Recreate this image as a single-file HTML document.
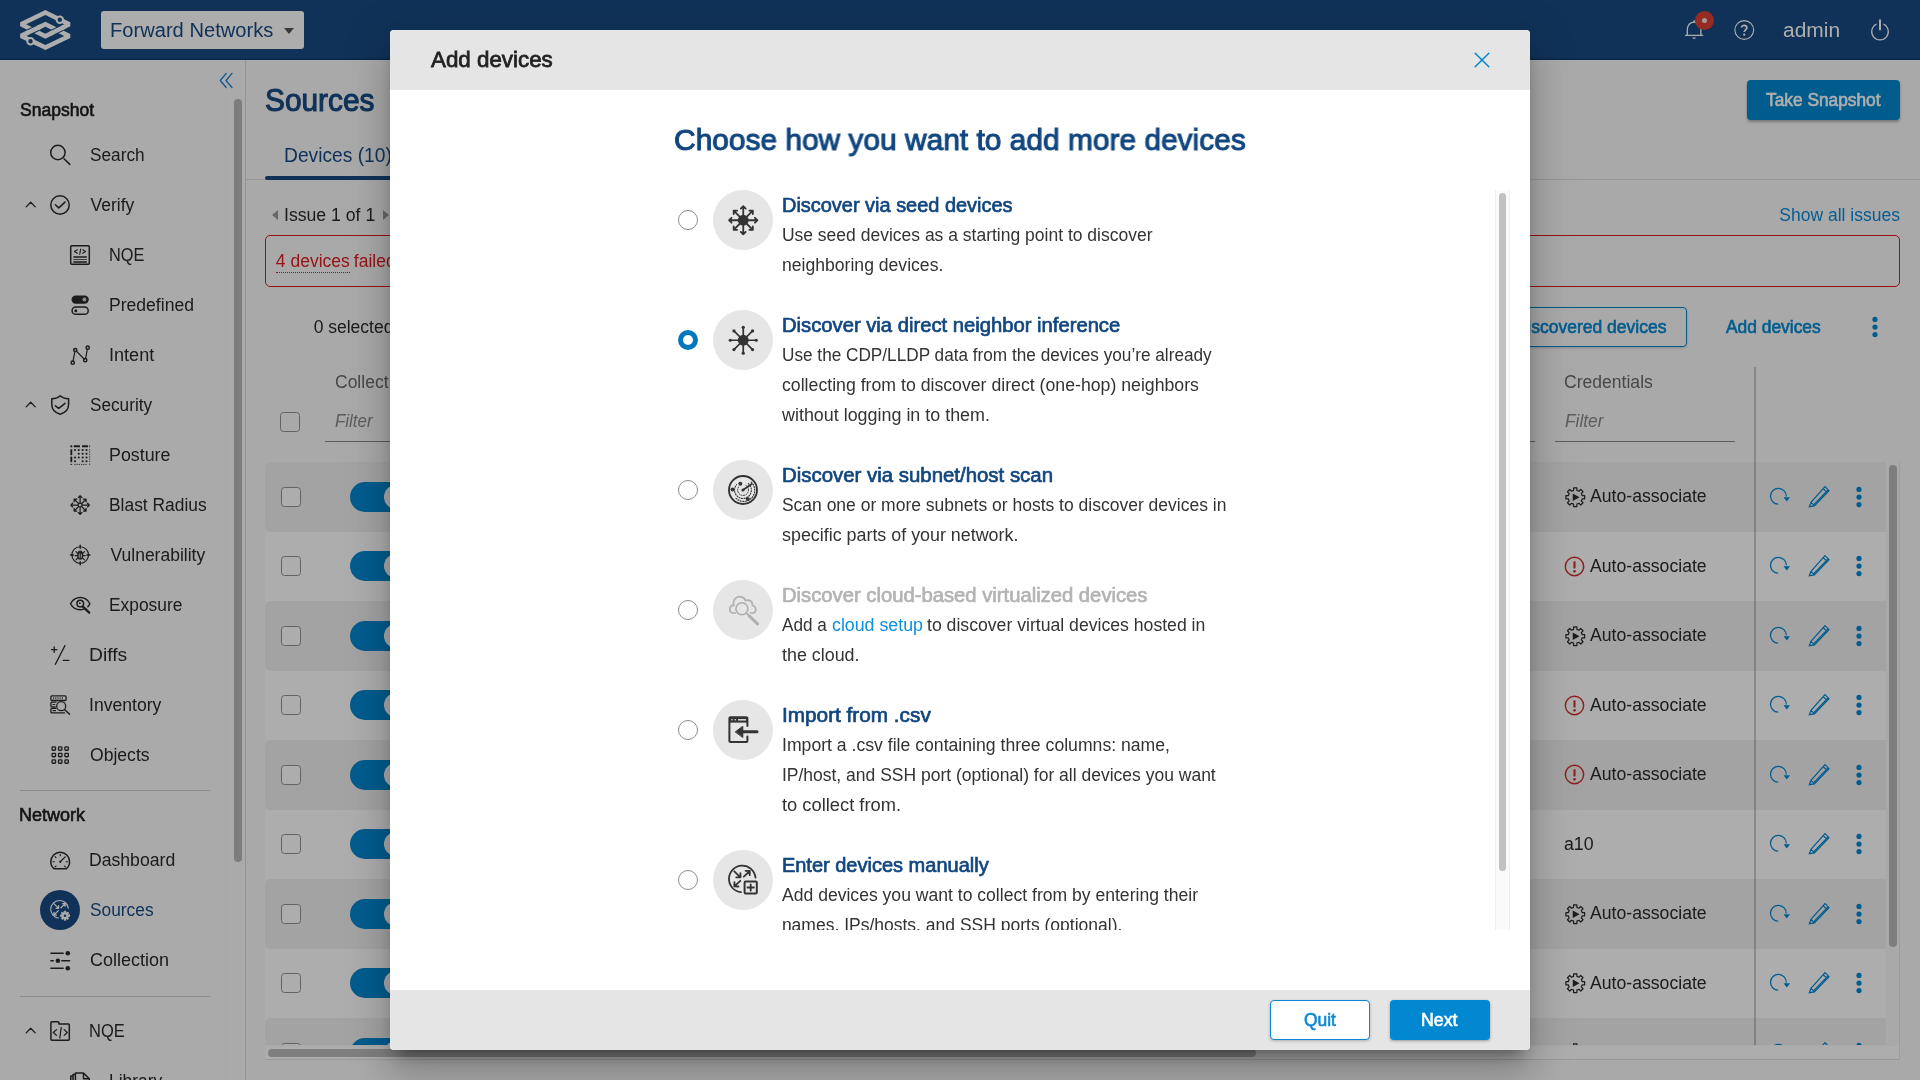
<!DOCTYPE html>
<html lang="en"><head><meta charset="utf-8"><title>Sources - Add devices</title>
<style>
*{margin:0;padding:0}
html,body{width:1920px;height:1080px;overflow:hidden;background:#fafafa}
body{font-family:"Liberation Sans",Arial,sans-serif;font-size:17.5px;color:#212121;position:relative}
header,nav,main,section,div,span,h1,h2,h3,h4,p,a,svg.ic{position:absolute;display:block}
header,nav,main,section{will-change:transform}
h1,h2,h3,h4{font-weight:normal}
.t{white-space:nowrap;line-height:30px;transform-origin:0 50%;font-size:17.5px}
.m{-webkit-text-stroke:.034em currentColor}
.b{font-weight:bold}
.i{font-style:italic}
a{text-decoration:none}
svg.ic{fill:none;stroke:currentColor;stroke-width:1.5;stroke-linecap:round;stroke-linejoin:round;overflow:visible}
.topbar{background:#184b82;box-shadow:inset 0 -1.5px 0 #0f3b6c;z-index:3}
.sidebar{background:#fbfbfb;overflow:hidden;z-index:1}
.main{background:#fafafa;overflow:hidden;z-index:1}
.rows{overflow:hidden;background:#fff}
.overlay{left:0;top:0;width:1920px;height:1080px;background:rgba(0,0,0,.32);z-index:5}
.modal{background:#fff;border-radius:4px;z-index:6;box-shadow:0 11px 15px -7px rgba(0,0,0,.4),0 24px 38px 3px rgba(0,0,0,.14),0 9px 46px 8px rgba(0,0,0,.1)}
.scroll{overflow:hidden}
</style></head>
<body>
<header class="topbar" style="left:0px;top:0px;width:1920px;height:60px;">
<svg class="ic" viewBox="0 0 52 52" width="52" height="52" style="left:19px;top:4px;color:#fff;"><path d="M26.40 8.40 L50.30 20.30 L26.40 32.20 L2.10 20.30 Z" stroke-width="4.5" stroke-linejoin="miter" stroke-miterlimit="1.5" stroke-linecap="butt"/><path d="M26.40 20.30 L50.30 31.90 L26.40 43.50 L2.10 31.90 Z" stroke-width="4.5" stroke-linejoin="miter" stroke-miterlimit="1.5" stroke-linecap="butt"/><path d="M9.39 28.42 L19.11 23.78" stroke="#184b82" stroke-width="6.6" stroke-linecap="butt"/><path d="M6.96 29.58 L21.54 22.62" stroke-width="4.5" stroke-linecap="butt"/><path d="M43.13 23.87 L33.57 28.63" stroke="#184b82" stroke-width="6.6" stroke-linecap="butt"/><path d="M45.52 22.68 L31.18 29.82" stroke-width="4.5" stroke-linecap="butt"/><circle cx="40.80" cy="15.75" r="3.2" fill="#184b82" stroke-width="2"/><circle cx="11.50" cy="37.20" r="3.2" fill="#184b82" stroke-width="2"/></svg>
<div class="org" style="left:101px;top:11px;width:203px;height:38px;background:#fff;border-radius:3px;"></div>
<span class="t" style="left:110.39px;top:15px;font-size:20px;color:#184b82;transform:scaleX(1.0063);">Forward Networks</span>
<svg class="ic" viewBox="0 0 10 6" width="10" height="6" style="left:284px;top:27.5px;color:#555"><path d="M0 0h10L5 6z" fill="currentColor" stroke="none"/></svg>
<svg class="ic" viewBox="0 0 24 24" width="24" height="24" style="left:1681.5px;top:18px;color:#fff;"><path d="M3.5 17.3 H20.7 M5.3 17 V11.6 C5.3 7.3 8.3 4.2 12.1 4.2 C15.9 4.2 18.9 7.3 18.9 11.6 V17" stroke-width="1.3"/><path d="M10.2 19.6 A2 2 0 0 0 14 19.6 Z" fill="currentColor" stroke="none"/><circle cx="12.1" cy="3.3" r="1" fill="currentColor" stroke="none"/></svg>
<div style="left:1694.6px;top:10.5px;width:19.6px;height:19.6px;background:#dc4033;border-radius:50%;"></div>
<div style="left:1701.9px;top:17.8px;width:5px;height:5px;background:#fff;border-radius:50%;opacity:.85"></div>
<svg class="ic" viewBox="0 0 24 24" width="24" height="24" style="left:1731.5px;top:18px;color:#fff;"><circle cx="12.25" cy="12" r="9.4" stroke-width="1.1"/><path d="M9.6 9.6 C9.6 6.6 14.8 6.6 14.8 9.7 C14.8 11.8 12.2 11.8 12.2 14.1" stroke-width="1.7" stroke-linecap="butt"/><circle cx="12.2" cy="16.7" r="1.1" fill="currentColor" stroke="none"/></svg>
<span class="t" style="left:1783.16px;top:15px;font-size:20px;color:#fff;transform:scaleX(1.0476);">admin</span>
<svg class="ic" viewBox="0 0 24 24" width="24" height="24" style="left:1868px;top:18px;color:#fff;"><path d="M8.2 6.2 A8.3 8.3 0 1 0 15.8 6.2" stroke-width="1.2"/><path d="M12 2.2 V11.6" stroke-width="2"/></svg>
</header>
<nav class="sidebar" style="left:0px;top:60px;width:245px;height:1020px;">
<div style="left:230px;top:35px;width:1px;height:985px;background:#fff"></div>
<div style="left:234px;top:39px;width:8px;height:763px;background:#b9b9b9;border-radius:4px;"></div>
<svg class="ic" viewBox="0 0 20 20" width="20" height="20" style="left:215.5px;top:10px;color:#1583d3;"><path d="M10.2 3.4 L4.3 10.5 L10.2 17.5 M16 3.4 L10 10.5 L16 17.5" stroke-width="1.3"/></svg>
<span class="t m" style="left:20.1px;top:35px;color:#1c1c1c;">Snapshot</span>
<svg class="ic" viewBox="0 0 20 20" width="20" height="20" style="left:50px;top:85px;color:#2a2a2a;"><circle cx="7.9" cy="7.5" r="7.2"/><path d="M14 13.8 L19.8 19.4" stroke-width="1.5"/></svg>
<span class="t" style="left:89.81px;top:80px;color:#2a2a2a;transform:scaleX(0.9841);">Search</span>
<svg class="ic" viewBox="0 0 20 20" width="20" height="20" style="left:50px;top:135px;color:#2a2a2a;"><circle cx="10" cy="10" r="9.2"/><path d="M5.4 9.8 L8.75 12.9 L15 7.1"/></svg>
<span class="t" style="left:90.5px;top:130px;color:#2a2a2a;">Verify</span>
<svg class="ic" viewBox="0 0 14 14" width="14" height="14" style="left:23.5px;top:138px;color:#2a2a2a;"><path d="M2.2 8.9 L6.7 4.2 L11.2 8.9" stroke-width="1.3"/></svg>
<svg class="ic" viewBox="0 0 20 20" width="20" height="20" style="left:70px;top:185px;color:#2a2a2a;"><rect x="0.7" y="0.7" width="18.6" height="18.6" rx="1"/><path d="M7.3 4.8 L4.4 6.5 L7.3 8.2 M10.7 4 L9.7 9.3 M12.75 4.8 L15.5 6.5 L12.75 8.2" stroke-width="1.1"/><path d="M3.3 12.1 H16.9 M3.3 16.9 H16.9" stroke-width="1.5" stroke-linecap="butt"/><path d="M3.3 14.5 H16.9" stroke-width="0.8" stroke-linecap="butt"/></svg>
<span class="t" style="left:109.19px;top:180px;color:#2a2a2a;transform:scaleX(0.9331);">NQE</span>
<svg class="ic" viewBox="0 0 20 20" width="20" height="20" style="left:70px;top:235px;color:#2a2a2a;"><rect x="1.5" y="0.4" width="17.3" height="8.4" rx="4.2" fill="currentColor" stroke="none"/><circle cx="14.4" cy="4.5" r="1.9" fill="#cfcfcf" stroke="none"/><rect x="2.1" y="12.1" width="16.1" height="7.2" rx="3.6"/><circle cx="5.8" cy="15.7" r="1.5" fill="currentColor" stroke="none"/></svg>
<span class="t" style="left:109.09px;top:230px;color:#2a2a2a;transform:scaleX(1.0036);">Predefined</span>
<svg class="ic" viewBox="0 0 20 20" width="20" height="20" style="left:70px;top:285px;color:#2a2a2a;"><path d="M3 16.1 L4.9 6.6 M6.4 6.1 L14.1 14 M15.6 13.6 L17.3 4.3" stroke-width="1.2"/><circle cx="2.7" cy="17.7" r="1.6"/><circle cx="5.25" cy="5" r="1.6"/><circle cx="15.25" cy="15.2" r="1.6"/><circle cx="17.7" cy="2.7" r="1.6"/></svg>
<span class="t" style="left:108.85px;top:280px;color:#2a2a2a;transform:scaleX(1.0333);">Intent</span>
<svg class="ic" viewBox="0 0 20 20" width="20" height="20" style="left:50px;top:335px;color:#2a2a2a;"><path d="M10.2 0.8 C8.2 2.8 5 3.6 1.8 3.8 V9.5 C1.8 14.5 5.5 17.8 10.2 19.3 C14.9 17.8 18.6 14.5 18.6 9.5 V3.8 C15.4 3.6 12.2 2.8 10.2 0.8 Z"/><path d="M5.4 10.8 L8.75 13.3 L15 8.3"/></svg>
<span class="t" style="left:89.81px;top:330px;color:#2a2a2a;transform:scaleX(0.9824);">Security</span>
<svg class="ic" viewBox="0 0 14 14" width="14" height="14" style="left:23.5px;top:338px;color:#2a2a2a;"><path d="M2.2 8.9 L6.7 4.2 L11.2 8.9" stroke-width="1.3"/></svg>
<svg class="ic" viewBox="0 0 20 20" width="20" height="20" style="left:70px;top:385px;color:#2a2a2a;"><g fill="currentColor" stroke="none"><circle cx="1.3" cy="1.3" r="1.1"/><rect x="3.7" y="0.35" width="6.3" height="1.9" rx=".6"/><rect x="12" y="0.35" width="6" height="1.9" rx=".6"/><rect x="19.3" y="0.4" width=".8" height="1.8"/><rect x="0.35" y="4.2" width="1.9" height="6" rx=".6"/><rect x="0.35" y="11.6" width="1.9" height="5.6" rx=".6"/><rect x="0.4" y="18.9" width="1.7" height=".9"/><circle cx="5" cy="5" r="1.08"/><circle cx="5" cy="12.5" r="1.08"/><circle cx="5" cy="16.25" r="1.08"/><circle cx="8.75" cy="5" r="1.08"/><circle cx="8.75" cy="8.75" r="1.08"/><circle cx="8.75" cy="12.5" r="1.08"/><circle cx="12.7" cy="5" r="1.08"/><circle cx="12.7" cy="8.75" r="1.08"/><circle cx="12.7" cy="12.5" r="1.08"/><circle cx="12.7" cy="16.25" r="1.08"/><circle cx="16.5" cy="5" r="1.08"/><circle cx="16.5" cy="8.75" r="1.08"/><circle cx="16.5" cy="12.5" r="1.08"/><circle cx="16.5" cy="16.25" r="1.08"/><rect x="4.4" y="18.9" width="1.2" height=".9"/><rect x="6.6" y="18.9" width="1.2" height=".9"/><rect x="8.8" y="18.9" width="1.2" height=".9"/><rect x="11" y="18.9" width="1.2" height=".9"/><rect x="13.2" y="18.9" width="1.2" height=".9"/><rect x="15.4" y="18.9" width="1.2" height=".9"/><rect x="19.3" y="4.3" width=".8" height="1.2"/><rect x="19.3" y="6.6" width=".8" height="1.2"/><rect x="19.3" y="8.9" width=".8" height="1.2"/><rect x="19.3" y="11.2" width=".8" height="1.2"/><rect x="19.3" y="13.5" width=".8" height="1.2"/><rect x="19.3" y="15.8" width=".8" height="1.2"/><rect x="19.3" y="18.6" width=".8" height="1.2"/></g></svg>
<span class="t" style="left:109.07px;top:380px;color:#2a2a2a;transform:scaleX(1.0180);">Posture</span>
<svg class="ic" viewBox="0 0 20 20" width="20" height="20" style="left:70px;top:435px;color:#2a2a2a;"><path d="M12.30 10.10 L19.40 10.10 M19.40 10.10 L17.56 11.94 M19.40 10.10 L17.56 8.26" stroke-width="1.25"/><path d="M11.66 11.66 L16.04 16.04 M16.04 16.04 L13.44 16.04 M16.04 16.04 L16.04 13.44" stroke-width="1.25"/><path d="M10.10 12.30 L10.10 19.40 M10.10 19.40 L8.26 17.56 M10.10 19.40 L11.94 17.56" stroke-width="1.25"/><path d="M8.54 11.66 L4.16 16.04 M4.16 16.04 L4.16 13.44 M4.16 16.04 L6.76 16.04" stroke-width="1.25"/><path d="M7.90 10.10 L0.80 10.10 M0.80 10.10 L2.64 8.26 M0.80 10.10 L2.64 11.94" stroke-width="1.25"/><path d="M8.54 8.54 L4.16 4.16 M4.16 4.16 L6.76 4.16 M4.16 4.16 L4.16 6.76" stroke-width="1.25"/><path d="M10.10 7.90 L10.10 0.80 M10.10 0.80 L11.94 2.64 M10.10 0.80 L8.26 2.64" stroke-width="1.25"/><path d="M11.66 8.54 L16.04 4.16 M16.04 4.16 L16.04 6.76 M16.04 4.16 L13.44 4.16" stroke-width="1.25"/><circle cx="10.1" cy="10.1" r="1.9" stroke-width="1.2"/></svg>
<span class="t" style="left:109.11px;top:430px;color:#2a2a2a;transform:scaleX(0.9943);">Blast Radius</span>
<svg class="ic" viewBox="0 0 20 20" width="20" height="20" style="left:70px;top:485px;color:#2a2a2a;"><circle cx="10.2" cy="10" r="8.3" stroke-width="1.15"/><path d="M10.2 0.3 V3.3 M10.2 16.7 V19.7 M0.5 10 H3.5 M16.9 10 H19.9" stroke-width="1.4"/><ellipse cx="10.2" cy="10.7" rx="2.4" ry="3.3" stroke-width="1.2"/><path d="M8.4 7.3 C8.8 5.6 11.6 5.6 12 7.3 M7.8 10.7 H5.2 M12.6 10.7 H15.2 M8.1 8.8 L6 6.6 M12.3 8.8 L14.4 6.6 M8.1 12.7 L6 14.8 M12.3 12.7 L14.4 14.8 M10.2 7.6 V13.8" stroke-width="1.2"/></svg>
<span class="t" style="left:110.5px;top:480px;color:#2a2a2a;">Vulnerability</span>
<svg class="ic" viewBox="0 0 20 20" width="20" height="20" style="left:70px;top:535px;color:#2a2a2a;"><path d="M13.8 14.1 C12.7 14.5 11.5 14.7 10.25 14.7 C6 14.7 2.4 12.4 0.5 8.75 C2.4 5.1 6 2.6 10.25 2.6 C14.5 2.6 18.1 5.1 19.9 8.75 C19.4 9.8 18.7 10.8 17.9 11.6"/><circle cx="10.25" cy="8.6" r="3.3"/><circle cx="9.8" cy="8.2" r=".9" fill="currentColor" stroke="none"/><path d="M12.9 11.6 L19.2 17.6" stroke-width="2.3"/></svg>
<span class="t" style="left:109.11px;top:530px;color:#2a2a2a;transform:scaleX(0.9923);">Exposure</span>
<svg class="ic" viewBox="0 0 20 20" width="20" height="20" style="left:50px;top:585px;color:#2a2a2a;"><path d="M4.2 1.9 V7.3 M1.5 4.6 H6.9 M15 0.5 L5.4 19.3 M13.3 15.4 H18.8" stroke-width="1.35"/></svg>
<span class="t" style="left:88.96px;top:580px;color:#2a2a2a;transform:scaleX(1.1009);">Diffs</span>
<svg class="ic" viewBox="0 0 20 20" width="20" height="20" style="left:50px;top:635px;color:#2a2a2a;"><rect x="0.9" y="0.9" width="15.2" height="4.6" rx="1" stroke-width="1.3"/><path d="M3.6 2.6 V3.8 M5.8 2.6 V3.8 M8 2.6 V3.8 M10.2 2.6 V3.8 M12.4 2.6 V3.8" stroke-width=".8"/><path d="M6 7.1 H1.9 A1 1 0 0 0 0.9 8.1 V10.9 A1 1 0 0 0 1.9 11.9 H5.2 M5.8 13.3 H1.9 A1 1 0 0 0 0.9 14.3 V16.9 A1 1 0 0 0 1.9 17.9 H14.5" stroke-width="1.3"/><path d="M3 9.5 H4.8 M3 15.6 H5.6" stroke-width="1.1"/><circle cx="11.2" cy="11.2" r="4.5" stroke-width="1.3"/><path d="M14.7 14.7 L19.6 19.2" stroke-width="1.5"/></svg>
<span class="t" style="left:88.89px;top:630px;color:#2a2a2a;transform:scaleX(1.0050);">Inventory</span>
<svg class="ic" viewBox="0 0 20 20" width="20" height="20" style="left:50px;top:685px;color:#2a2a2a;"><g stroke-width="1.35"><rect x="2.10" y="1.80" width="3.4" height="3.4" rx=".8"/><rect x="2.10" y="8.30" width="3.4" height="3.4" rx=".8"/><rect x="2.10" y="14.80" width="3.4" height="3.4" rx=".8"/><rect x="8.50" y="1.80" width="3.4" height="3.4" rx=".8"/><rect x="8.50" y="8.30" width="3.4" height="3.4" rx=".8"/><rect x="8.50" y="14.80" width="3.4" height="3.4" rx=".8"/><rect x="14.90" y="1.80" width="3.4" height="3.4" rx=".8"/><rect x="14.90" y="8.30" width="3.4" height="3.4" rx=".8"/><rect x="14.90" y="14.80" width="3.4" height="3.4" rx=".8"/></g></svg>
<span class="t" style="left:89.7px;top:680px;color:#2a2a2a;transform:scaleX(1.0043);">Objects</span>
<div style="left:20px;top:730px;width:190px;height:1px;background:#d0d0d0"></div>
<span class="t m" style="left:19.36px;top:740px;color:#1c1c1c;transform:scaleX(1.0295);">Network</span>
<svg class="ic" viewBox="0 0 20 20" width="20" height="20" style="left:50px;top:790px;color:#2a2a2a;"><path d="M4.2 18.8 H16.2 C18.6 16.9 19.6 14.5 19.6 11.7 A9.4 9.4 0 0 0 0.8 11.7 C0.8 14.5 1.8 16.9 4.2 18.8 Z"/><path d="M10.25 11.8 L15.2 6.9" stroke-width="1.3"/><circle cx="10.25" cy="11.8" r="1.1" fill="currentColor" stroke="none"/><path d="M16.25 11.80 L17.55 11.80" stroke-width="1.1"/><path d="M14.49 16.04 L15.41 16.96" stroke-width="1.1"/><path d="M6.01 16.04 L5.09 16.96" stroke-width="1.1"/><path d="M4.25 11.80 L2.95 11.80" stroke-width="1.1"/><path d="M6.01 7.56 L5.09 6.64" stroke-width="1.1"/><path d="M10.25 5.80 L10.25 4.50" stroke-width="1.1"/></svg>
<span class="t" style="left:89.09px;top:785px;color:#2a2a2a;transform:scaleX(1.0066);">Dashboard</span>
<div style="left:40px;top:830px;width:40px;height:40px;background:#184b82;border-radius:50%;"></div>
<svg class="ic" viewBox="0 0 20 20" width="20" height="20" style="left:50px;top:840px;color:#fff;"><path d="M18.3 8.2 A8.8 8.8 0 1 0 8.6 18" stroke-width="1.1"/><path d="M3.90 3.60 L8.60 8.30 M8.60 8.30 L6.00 8.30 M8.60 8.30 L8.60 5.70" stroke-width="1.2"/><path d="M10.90 7.80 L15.20 3.60 M15.20 3.60 L15.17 6.20 M15.20 3.60 L12.60 3.57" stroke-width="1.2"/><path d="M8.40 10.60 L3.90 15.00 M3.90 15.00 L3.93 12.40 M3.90 15.00 L6.50 15.03" stroke-width="1.2"/><path d="M19.53 14.91 L19.53 16.49 L18.21 16.47 L17.81 17.42 L18.76 18.35 L17.65 19.46 L16.72 18.51 L15.77 18.91 L15.79 20.23 L14.21 20.23 L14.23 18.91 L13.28 18.51 L12.35 19.46 L11.24 18.35 L12.19 17.42 L11.79 16.47 L10.47 16.49 L10.47 14.91 L11.79 14.93 L12.19 13.98 L11.24 13.05 L12.35 11.94 L13.28 12.89 L14.23 12.49 L14.21 11.17 L15.79 11.17 L15.77 12.49 L16.72 12.89 L17.65 11.94 L18.76 13.05 L17.81 13.98 L18.21 14.93 Z" fill="currentColor" stroke="currentColor" stroke-width=".9" stroke-linejoin="round"/><circle cx="15" cy="15.7" r="1.3" fill="#184b82" stroke="none"/></svg>
<span class="t" style="left:89.81px;top:835px;color:#184b82;transform:scaleX(0.9897);">Sources</span>
<svg class="ic" viewBox="0 0 20 20" width="20" height="20" style="left:50px;top:890px;color:#2a2a2a;"><path d="M0.9 3.2 H13.2 M0.9 10.8 H3.3 M11.8 10.8 H19.6 M0.9 18.3 H13.2" stroke-width="1.4"/><circle cx="17.8" cy="3.3" r="2.3" fill="currentColor" stroke="none"/><circle cx="7.9" cy="10.8" r="2.3" fill="currentColor" stroke="none"/><circle cx="17.8" cy="18.3" r="2.3" fill="currentColor" stroke="none"/></svg>
<span class="t" style="left:89.68px;top:885px;color:#2a2a2a;transform:scaleX(1.0280);">Collection</span>
<div style="left:20px;top:936px;width:190px;height:1px;background:#d0d0d0"></div>
<svg class="ic" viewBox="0 0 20 20" width="20" height="20" style="left:50px;top:961px;color:#2a2a2a;"><path d="M1.9 0.8 H7.9 A1 1 0 0 1 8.9 1.8 V2.9 H18.3 A1 1 0 0 1 19.3 3.9 V18.2 A1 1 0 0 1 18.3 19.2 H1.9 A1 1 0 0 1 0.9 18.2 V1.8 A1 1 0 0 1 1.9 0.8 Z"/><path d="M6.5 8.6 L3.3 11.5 L6.5 14.4 M11.25 6.5 L9.8 16.9 M14.2 8.6 L17.3 11.5 L14.2 14.4" stroke-width="1.25"/></svg>
<span class="t" style="left:89.18px;top:956px;color:#2a2a2a;transform:scaleX(0.9401);">NQE</span>
<svg class="ic" viewBox="0 0 14 14" width="14" height="14" style="left:23.5px;top:964px;color:#2a2a2a;"><path d="M2.2 8.9 L6.7 4.2 L11.2 8.9" stroke-width="1.3"/></svg>
<svg class="ic" viewBox="0 0 20 20" width="20" height="20" style="left:70px;top:1011px;color:#2a2a2a;"><path d="M5.4 2 H13.5 L19.3 7.8 V19 H5.4 Z M13.5 2 V7.8 H19.3 M5.4 3.6 H3 V19 M3 5 H0.8 V19"/></svg>
<span class="t" style="left:109.11px;top:1006px;color:#2a2a2a;transform:scaleX(0.9933);">Library</span>
</nav>
<main class="main" style="left:245px;top:60px;width:1675px;height:1020px;">
<div style="left:0px;top:0px;width:1px;height:1020px;background:#dadada"></div>
<h1 class="t m" style="left:19.74px;top:20px;font-size:32px;line-height:40px;color:#184b82;transform:scaleX(0.9327);">Sources</h1>
<div class="btn" style="left:1502px;top:20px;width:153px;height:40px;background:#0288d1;border-radius:4px;box-shadow:0 2px 3px rgba(0,0,0,.3);"></div>
<span class="t m" style="left:1520.75px;top:25px;color:#fff;transform:scaleX(0.9892);">Take Snapshot</span>
<div style="left:0px;top:119px;width:1675px;height:1px;background:#dcdcdc"></div>
<span class="t" style="left:39.26px;top:80px;font-size:20px;color:#184b82;transform:scaleX(0.9607);">Devices (10)</span>
<div style="left:20px;top:116px;width:300px;height:4px;background:#184b82;border-radius:2px;"></div>
<svg class="ic" viewBox="0 0 6 10" width="6" height="10" style="left:27px;top:150px;color:#9a9a9a"><path d="M6 0v10L0 5z" fill="currentColor" stroke="none"/></svg>
<svg class="ic" viewBox="0 0 6 10" width="6" height="10" style="left:138px;top:150px;color:#9a9a9a"><path d="M0 0v10l6-5z" fill="currentColor" stroke="none"/></svg>
<span class="t" style="left:38.89px;top:140px;color:#2a2a2a;transform:scaleX(1.0085);">Issue 1 of 1</span>
<span class="t" style="left:1534.3px;top:140px;color:#0b8ad8;">Show all issues</span>
<div class="alert" style="left:20px;top:175px;width:1635px;height:52px;border:1.5px solid #de1b20;border-radius:5px;box-sizing:border-box;"></div>
<span class="t" style="left:30.85px;top:186px;color:#de1b20;border-bottom:1px dotted #de1b20;line-height:22px;margin-top:4px;">4 devices</span>
<span class="t" style="left:108.8px;top:186px;color:#de1b20;">failed collection</span>
<span class="t" style="left:68.65px;top:252px;color:#2a2a2a;">0 selected</span>
<div style="left:1155px;top:247px;width:287px;height:40px;border:1px solid #0288d1;border-radius:4px;box-sizing:border-box;box-shadow:0 1px 3px rgba(0,0,0,.2);"></div>
<span class="t m" style="left:1230.15px;top:252px;color:#0288d1;">View discovered devices</span>
<span class="t m" style="left:1481.05px;top:252px;color:#0288d1;transform:scaleX(0.9932);">Add devices</span>
<svg class="ic" viewBox="0 0 24 24" width="24" height="24" style="left:1618px;top:255px;color:#0288d1;"><circle cx="12" cy="4.4" r="2.6" fill="currentColor" stroke="none"/><circle cx="12" cy="12.05" r="2.6" fill="currentColor" stroke="none"/><circle cx="12" cy="19.6" r="2.6" fill="currentColor" stroke="none"/></svg>
<span class="t" style="left:90px;top:306.6px;color:#6a6a6a;">Collect</span>
<div style="left:35px;top:352px;width:20px;height:20px;border:1.3px solid #919191;border-radius:3.5px;box-sizing:border-box;"></div>
<span class="t i" style="left:90.02px;top:346px;color:#8a8a8a;transform:scaleX(0.9655);">Filter</span>
<div style="left:80px;top:380.5px;width:1210px;height:1px;background:#8a8a8a"></div>
<span class="t" style="left:1319.2px;top:306.6px;color:#6a6a6a;transform:scaleX(1.0034);">Credentials</span>
<span class="t i" style="left:1319.5px;top:346px;color:#8a8a8a;transform:scaleX(0.9910);">Filter</span>
<div style="left:1310px;top:380.5px;width:180px;height:1px;background:#8a8a8a"></div>
<div class="rows" style="left:20px;top:402px;width:1621px;height:583px;">
<div style="left:0px;top:0px;width:1621px;height:69.5px;background:#f1f1f1;border-radius:5px 0 0 5px;"></div>
<div style="left:16px;top:24.75px;width:20px;height:20px;border:1.3px solid #919191;border-radius:3.5px;box-sizing:border-box;background:#fff"></div>
<div style="left:85px;top:19.75px;width:60px;height:30px;background:#0288d1;border-radius:15px;"></div>
<div style="left:119px;top:22.75px;width:24px;height:24px;background:#fff;border-radius:50%;"></div>
<svg class="ic" viewBox="0 0 22 22" width="20.5" height="20.5" style="left:1299.55px;top:24.5px;color:#2a2a2a;"><path d="M21.05 9.25 L21.05 12.75 L18.39 12.77 L17.48 14.97 L19.35 16.87 L16.87 19.35 L14.97 17.48 L12.77 18.39 L12.75 21.05 L9.25 21.05 L9.23 18.39 L7.03 17.48 L5.13 19.35 L2.65 16.87 L4.52 14.97 L3.61 12.77 L0.95 12.75 L0.95 9.25 L3.61 9.23 L4.52 7.03 L2.65 5.13 L5.13 2.65 L7.03 4.52 L9.23 3.61 L9.25 0.95 L12.75 0.95 L12.77 3.61 L14.97 4.52 L16.87 2.65 L19.35 5.13 L17.48 7.03 L18.39 9.23 Z" stroke-width="1.3" stroke-linejoin="round"/><path d="M8.3 6.9 V15.1 L15.6 11 Z" fill="currentColor" stroke="none"/></svg>
<span class="t" style="left:1325.3px;top:19.45px;color:#2a2a2a;transform:scaleX(1.0078);">Auto-associate</span>
<svg class="ic" viewBox="0 0 24 24" width="24" height="24" style="left:1502px;top:22.75px;color:#0288d1;"><path d="M11.2 19.2 A7.9 7.9 0 1 1 19.3 11.6" stroke-width="1.25" stroke-linecap="butt"/><path d="M16.6 12.2 H23 L19.75 16.6 Z" fill="currentColor" stroke="none"/></svg>
<svg class="ic" viewBox="0 0 24 24" width="24" height="24" style="left:1542px;top:22.75px;color:#0288d1;"><path d="M2.3 21.7 L4 17.4 L18 1.7 L22 5.7 L7.4 20.9 Z M16.1 3.6 L20.2 7.5 M4 17.4 L7.4 20.9 M6.5 19.9 L21 4.8" stroke-width="1.2" stroke-linejoin="miter"/></svg>
<svg class="ic" viewBox="0 0 24 24" width="24" height="24" style="left:1581.7px;top:22.75px;color:#0288d1;"><circle cx="12" cy="4.4" r="2.6" fill="currentColor" stroke="none"/><circle cx="12" cy="12.05" r="2.6" fill="currentColor" stroke="none"/><circle cx="12" cy="19.6" r="2.6" fill="currentColor" stroke="none"/></svg>
<div style="left:16px;top:94.25px;width:20px;height:20px;border:1.3px solid #919191;border-radius:3.5px;box-sizing:border-box;background:#fff"></div>
<div style="left:85px;top:89.25px;width:60px;height:30px;background:#0288d1;border-radius:15px;"></div>
<div style="left:119px;top:92.25px;width:24px;height:24px;background:#fff;border-radius:50%;"></div>
<svg class="ic" viewBox="0 0 22 22" width="21" height="21" style="left:1299.3px;top:93.75px;color:#d32f2f;"><circle cx="11" cy="11" r="9.6" stroke-width="1.5"/><path d="M11 5.6 V13" stroke-width="2.2" stroke-linecap="butt"/><circle cx="11" cy="16.1" r="1.35" fill="currentColor" stroke="none"/></svg>
<span class="t" style="left:1325.3px;top:88.95px;color:#2a2a2a;transform:scaleX(1.0078);">Auto-associate</span>
<svg class="ic" viewBox="0 0 24 24" width="24" height="24" style="left:1502px;top:92.25px;color:#0288d1;"><path d="M11.2 19.2 A7.9 7.9 0 1 1 19.3 11.6" stroke-width="1.25" stroke-linecap="butt"/><path d="M16.6 12.2 H23 L19.75 16.6 Z" fill="currentColor" stroke="none"/></svg>
<svg class="ic" viewBox="0 0 24 24" width="24" height="24" style="left:1542px;top:92.25px;color:#0288d1;"><path d="M2.3 21.7 L4 17.4 L18 1.7 L22 5.7 L7.4 20.9 Z M16.1 3.6 L20.2 7.5 M4 17.4 L7.4 20.9 M6.5 19.9 L21 4.8" stroke-width="1.2" stroke-linejoin="miter"/></svg>
<svg class="ic" viewBox="0 0 24 24" width="24" height="24" style="left:1581.7px;top:92.25px;color:#0288d1;"><circle cx="12" cy="4.4" r="2.6" fill="currentColor" stroke="none"/><circle cx="12" cy="12.05" r="2.6" fill="currentColor" stroke="none"/><circle cx="12" cy="19.6" r="2.6" fill="currentColor" stroke="none"/></svg>
<div style="left:0px;top:139px;width:1621px;height:69.5px;background:#f1f1f1;border-radius:5px 0 0 5px;"></div>
<div style="left:16px;top:163.75px;width:20px;height:20px;border:1.3px solid #919191;border-radius:3.5px;box-sizing:border-box;background:#fff"></div>
<div style="left:85px;top:158.75px;width:60px;height:30px;background:#0288d1;border-radius:15px;"></div>
<div style="left:119px;top:161.75px;width:24px;height:24px;background:#fff;border-radius:50%;"></div>
<svg class="ic" viewBox="0 0 22 22" width="20.5" height="20.5" style="left:1299.55px;top:163.5px;color:#2a2a2a;"><path d="M21.05 9.25 L21.05 12.75 L18.39 12.77 L17.48 14.97 L19.35 16.87 L16.87 19.35 L14.97 17.48 L12.77 18.39 L12.75 21.05 L9.25 21.05 L9.23 18.39 L7.03 17.48 L5.13 19.35 L2.65 16.87 L4.52 14.97 L3.61 12.77 L0.95 12.75 L0.95 9.25 L3.61 9.23 L4.52 7.03 L2.65 5.13 L5.13 2.65 L7.03 4.52 L9.23 3.61 L9.25 0.95 L12.75 0.95 L12.77 3.61 L14.97 4.52 L16.87 2.65 L19.35 5.13 L17.48 7.03 L18.39 9.23 Z" stroke-width="1.3" stroke-linejoin="round"/><path d="M8.3 6.9 V15.1 L15.6 11 Z" fill="currentColor" stroke="none"/></svg>
<span class="t" style="left:1325.3px;top:158.45px;color:#2a2a2a;transform:scaleX(1.0078);">Auto-associate</span>
<svg class="ic" viewBox="0 0 24 24" width="24" height="24" style="left:1502px;top:161.75px;color:#0288d1;"><path d="M11.2 19.2 A7.9 7.9 0 1 1 19.3 11.6" stroke-width="1.25" stroke-linecap="butt"/><path d="M16.6 12.2 H23 L19.75 16.6 Z" fill="currentColor" stroke="none"/></svg>
<svg class="ic" viewBox="0 0 24 24" width="24" height="24" style="left:1542px;top:161.75px;color:#0288d1;"><path d="M2.3 21.7 L4 17.4 L18 1.7 L22 5.7 L7.4 20.9 Z M16.1 3.6 L20.2 7.5 M4 17.4 L7.4 20.9 M6.5 19.9 L21 4.8" stroke-width="1.2" stroke-linejoin="miter"/></svg>
<svg class="ic" viewBox="0 0 24 24" width="24" height="24" style="left:1581.7px;top:161.75px;color:#0288d1;"><circle cx="12" cy="4.4" r="2.6" fill="currentColor" stroke="none"/><circle cx="12" cy="12.05" r="2.6" fill="currentColor" stroke="none"/><circle cx="12" cy="19.6" r="2.6" fill="currentColor" stroke="none"/></svg>
<div style="left:16px;top:233.25px;width:20px;height:20px;border:1.3px solid #919191;border-radius:3.5px;box-sizing:border-box;background:#fff"></div>
<div style="left:85px;top:228.25px;width:60px;height:30px;background:#0288d1;border-radius:15px;"></div>
<div style="left:119px;top:231.25px;width:24px;height:24px;background:#fff;border-radius:50%;"></div>
<svg class="ic" viewBox="0 0 22 22" width="21" height="21" style="left:1299.3px;top:232.75px;color:#d32f2f;"><circle cx="11" cy="11" r="9.6" stroke-width="1.5"/><path d="M11 5.6 V13" stroke-width="2.2" stroke-linecap="butt"/><circle cx="11" cy="16.1" r="1.35" fill="currentColor" stroke="none"/></svg>
<span class="t" style="left:1325.3px;top:227.95px;color:#2a2a2a;transform:scaleX(1.0078);">Auto-associate</span>
<svg class="ic" viewBox="0 0 24 24" width="24" height="24" style="left:1502px;top:231.25px;color:#0288d1;"><path d="M11.2 19.2 A7.9 7.9 0 1 1 19.3 11.6" stroke-width="1.25" stroke-linecap="butt"/><path d="M16.6 12.2 H23 L19.75 16.6 Z" fill="currentColor" stroke="none"/></svg>
<svg class="ic" viewBox="0 0 24 24" width="24" height="24" style="left:1542px;top:231.25px;color:#0288d1;"><path d="M2.3 21.7 L4 17.4 L18 1.7 L22 5.7 L7.4 20.9 Z M16.1 3.6 L20.2 7.5 M4 17.4 L7.4 20.9 M6.5 19.9 L21 4.8" stroke-width="1.2" stroke-linejoin="miter"/></svg>
<svg class="ic" viewBox="0 0 24 24" width="24" height="24" style="left:1581.7px;top:231.25px;color:#0288d1;"><circle cx="12" cy="4.4" r="2.6" fill="currentColor" stroke="none"/><circle cx="12" cy="12.05" r="2.6" fill="currentColor" stroke="none"/><circle cx="12" cy="19.6" r="2.6" fill="currentColor" stroke="none"/></svg>
<div style="left:0px;top:278px;width:1621px;height:69.5px;background:#f1f1f1;border-radius:5px 0 0 5px;"></div>
<div style="left:16px;top:302.75px;width:20px;height:20px;border:1.3px solid #919191;border-radius:3.5px;box-sizing:border-box;background:#fff"></div>
<div style="left:85px;top:297.75px;width:60px;height:30px;background:#0288d1;border-radius:15px;"></div>
<div style="left:119px;top:300.75px;width:24px;height:24px;background:#fff;border-radius:50%;"></div>
<svg class="ic" viewBox="0 0 22 22" width="21" height="21" style="left:1299.3px;top:302.25px;color:#d32f2f;"><circle cx="11" cy="11" r="9.6" stroke-width="1.5"/><path d="M11 5.6 V13" stroke-width="2.2" stroke-linecap="butt"/><circle cx="11" cy="16.1" r="1.35" fill="currentColor" stroke="none"/></svg>
<span class="t" style="left:1325.3px;top:297.45px;color:#2a2a2a;transform:scaleX(1.0078);">Auto-associate</span>
<svg class="ic" viewBox="0 0 24 24" width="24" height="24" style="left:1502px;top:300.75px;color:#0288d1;"><path d="M11.2 19.2 A7.9 7.9 0 1 1 19.3 11.6" stroke-width="1.25" stroke-linecap="butt"/><path d="M16.6 12.2 H23 L19.75 16.6 Z" fill="currentColor" stroke="none"/></svg>
<svg class="ic" viewBox="0 0 24 24" width="24" height="24" style="left:1542px;top:300.75px;color:#0288d1;"><path d="M2.3 21.7 L4 17.4 L18 1.7 L22 5.7 L7.4 20.9 Z M16.1 3.6 L20.2 7.5 M4 17.4 L7.4 20.9 M6.5 19.9 L21 4.8" stroke-width="1.2" stroke-linejoin="miter"/></svg>
<svg class="ic" viewBox="0 0 24 24" width="24" height="24" style="left:1581.7px;top:300.75px;color:#0288d1;"><circle cx="12" cy="4.4" r="2.6" fill="currentColor" stroke="none"/><circle cx="12" cy="12.05" r="2.6" fill="currentColor" stroke="none"/><circle cx="12" cy="19.6" r="2.6" fill="currentColor" stroke="none"/></svg>
<div style="left:16px;top:372.25px;width:20px;height:20px;border:1.3px solid #919191;border-radius:3.5px;box-sizing:border-box;background:#fff"></div>
<div style="left:85px;top:367.25px;width:60px;height:30px;background:#0288d1;border-radius:15px;"></div>
<div style="left:119px;top:370.25px;width:24px;height:24px;background:#fff;border-radius:50%;"></div>
<span class="t" style="left:1299.29px;top:366.95px;color:#2a2a2a;transform:scaleX(1.0125);">a10</span>
<svg class="ic" viewBox="0 0 24 24" width="24" height="24" style="left:1502px;top:370.25px;color:#0288d1;"><path d="M11.2 19.2 A7.9 7.9 0 1 1 19.3 11.6" stroke-width="1.25" stroke-linecap="butt"/><path d="M16.6 12.2 H23 L19.75 16.6 Z" fill="currentColor" stroke="none"/></svg>
<svg class="ic" viewBox="0 0 24 24" width="24" height="24" style="left:1542px;top:370.25px;color:#0288d1;"><path d="M2.3 21.7 L4 17.4 L18 1.7 L22 5.7 L7.4 20.9 Z M16.1 3.6 L20.2 7.5 M4 17.4 L7.4 20.9 M6.5 19.9 L21 4.8" stroke-width="1.2" stroke-linejoin="miter"/></svg>
<svg class="ic" viewBox="0 0 24 24" width="24" height="24" style="left:1581.7px;top:370.25px;color:#0288d1;"><circle cx="12" cy="4.4" r="2.6" fill="currentColor" stroke="none"/><circle cx="12" cy="12.05" r="2.6" fill="currentColor" stroke="none"/><circle cx="12" cy="19.6" r="2.6" fill="currentColor" stroke="none"/></svg>
<div style="left:0px;top:417px;width:1621px;height:69.5px;background:#f1f1f1;border-radius:5px 0 0 5px;"></div>
<div style="left:16px;top:441.75px;width:20px;height:20px;border:1.3px solid #919191;border-radius:3.5px;box-sizing:border-box;background:#fff"></div>
<div style="left:85px;top:436.75px;width:60px;height:30px;background:#0288d1;border-radius:15px;"></div>
<div style="left:119px;top:439.75px;width:24px;height:24px;background:#fff;border-radius:50%;"></div>
<svg class="ic" viewBox="0 0 22 22" width="20.5" height="20.5" style="left:1299.55px;top:441.5px;color:#2a2a2a;"><path d="M21.05 9.25 L21.05 12.75 L18.39 12.77 L17.48 14.97 L19.35 16.87 L16.87 19.35 L14.97 17.48 L12.77 18.39 L12.75 21.05 L9.25 21.05 L9.23 18.39 L7.03 17.48 L5.13 19.35 L2.65 16.87 L4.52 14.97 L3.61 12.77 L0.95 12.75 L0.95 9.25 L3.61 9.23 L4.52 7.03 L2.65 5.13 L5.13 2.65 L7.03 4.52 L9.23 3.61 L9.25 0.95 L12.75 0.95 L12.77 3.61 L14.97 4.52 L16.87 2.65 L19.35 5.13 L17.48 7.03 L18.39 9.23 Z" stroke-width="1.3" stroke-linejoin="round"/><path d="M8.3 6.9 V15.1 L15.6 11 Z" fill="currentColor" stroke="none"/></svg>
<span class="t" style="left:1325.3px;top:436.45px;color:#2a2a2a;transform:scaleX(1.0078);">Auto-associate</span>
<svg class="ic" viewBox="0 0 24 24" width="24" height="24" style="left:1502px;top:439.75px;color:#0288d1;"><path d="M11.2 19.2 A7.9 7.9 0 1 1 19.3 11.6" stroke-width="1.25" stroke-linecap="butt"/><path d="M16.6 12.2 H23 L19.75 16.6 Z" fill="currentColor" stroke="none"/></svg>
<svg class="ic" viewBox="0 0 24 24" width="24" height="24" style="left:1542px;top:439.75px;color:#0288d1;"><path d="M2.3 21.7 L4 17.4 L18 1.7 L22 5.7 L7.4 20.9 Z M16.1 3.6 L20.2 7.5 M4 17.4 L7.4 20.9 M6.5 19.9 L21 4.8" stroke-width="1.2" stroke-linejoin="miter"/></svg>
<svg class="ic" viewBox="0 0 24 24" width="24" height="24" style="left:1581.7px;top:439.75px;color:#0288d1;"><circle cx="12" cy="4.4" r="2.6" fill="currentColor" stroke="none"/><circle cx="12" cy="12.05" r="2.6" fill="currentColor" stroke="none"/><circle cx="12" cy="19.6" r="2.6" fill="currentColor" stroke="none"/></svg>
<div style="left:16px;top:511.25px;width:20px;height:20px;border:1.3px solid #919191;border-radius:3.5px;box-sizing:border-box;background:#fff"></div>
<div style="left:85px;top:506.25px;width:60px;height:30px;background:#0288d1;border-radius:15px;"></div>
<div style="left:119px;top:509.25px;width:24px;height:24px;background:#fff;border-radius:50%;"></div>
<svg class="ic" viewBox="0 0 22 22" width="20.5" height="20.5" style="left:1299.55px;top:511px;color:#2a2a2a;"><path d="M21.05 9.25 L21.05 12.75 L18.39 12.77 L17.48 14.97 L19.35 16.87 L16.87 19.35 L14.97 17.48 L12.77 18.39 L12.75 21.05 L9.25 21.05 L9.23 18.39 L7.03 17.48 L5.13 19.35 L2.65 16.87 L4.52 14.97 L3.61 12.77 L0.95 12.75 L0.95 9.25 L3.61 9.23 L4.52 7.03 L2.65 5.13 L5.13 2.65 L7.03 4.52 L9.23 3.61 L9.25 0.95 L12.75 0.95 L12.77 3.61 L14.97 4.52 L16.87 2.65 L19.35 5.13 L17.48 7.03 L18.39 9.23 Z" stroke-width="1.3" stroke-linejoin="round"/><path d="M8.3 6.9 V15.1 L15.6 11 Z" fill="currentColor" stroke="none"/></svg>
<span class="t" style="left:1325.3px;top:505.95px;color:#2a2a2a;transform:scaleX(1.0078);">Auto-associate</span>
<svg class="ic" viewBox="0 0 24 24" width="24" height="24" style="left:1502px;top:509.25px;color:#0288d1;"><path d="M11.2 19.2 A7.9 7.9 0 1 1 19.3 11.6" stroke-width="1.25" stroke-linecap="butt"/><path d="M16.6 12.2 H23 L19.75 16.6 Z" fill="currentColor" stroke="none"/></svg>
<svg class="ic" viewBox="0 0 24 24" width="24" height="24" style="left:1542px;top:509.25px;color:#0288d1;"><path d="M2.3 21.7 L4 17.4 L18 1.7 L22 5.7 L7.4 20.9 Z M16.1 3.6 L20.2 7.5 M4 17.4 L7.4 20.9 M6.5 19.9 L21 4.8" stroke-width="1.2" stroke-linejoin="miter"/></svg>
<svg class="ic" viewBox="0 0 24 24" width="24" height="24" style="left:1581.7px;top:509.25px;color:#0288d1;"><circle cx="12" cy="4.4" r="2.6" fill="currentColor" stroke="none"/><circle cx="12" cy="12.05" r="2.6" fill="currentColor" stroke="none"/><circle cx="12" cy="19.6" r="2.6" fill="currentColor" stroke="none"/></svg>
<div style="left:0px;top:556px;width:1621px;height:69.5px;background:#f1f1f1;border-radius:5px 0 0 5px;"></div>
<div style="left:16px;top:580.75px;width:20px;height:20px;border:1.3px solid #919191;border-radius:3.5px;box-sizing:border-box;background:#fff"></div>
<div style="left:85px;top:575.75px;width:60px;height:30px;background:#0288d1;border-radius:15px;"></div>
<div style="left:119px;top:578.75px;width:24px;height:24px;background:#fff;border-radius:50%;"></div>
<svg class="ic" viewBox="0 0 22 22" width="20.5" height="20.5" style="left:1299.55px;top:580.5px;color:#2a2a2a;"><path d="M21.05 9.25 L21.05 12.75 L18.39 12.77 L17.48 14.97 L19.35 16.87 L16.87 19.35 L14.97 17.48 L12.77 18.39 L12.75 21.05 L9.25 21.05 L9.23 18.39 L7.03 17.48 L5.13 19.35 L2.65 16.87 L4.52 14.97 L3.61 12.77 L0.95 12.75 L0.95 9.25 L3.61 9.23 L4.52 7.03 L2.65 5.13 L5.13 2.65 L7.03 4.52 L9.23 3.61 L9.25 0.95 L12.75 0.95 L12.77 3.61 L14.97 4.52 L16.87 2.65 L19.35 5.13 L17.48 7.03 L18.39 9.23 Z" stroke-width="1.3" stroke-linejoin="round"/><path d="M8.3 6.9 V15.1 L15.6 11 Z" fill="currentColor" stroke="none"/></svg>
<span class="t" style="left:1325.3px;top:575.45px;color:#2a2a2a;transform:scaleX(1.0078);">Auto-associate</span>
<svg class="ic" viewBox="0 0 24 24" width="24" height="24" style="left:1502px;top:578.75px;color:#0288d1;"><path d="M11.2 19.2 A7.9 7.9 0 1 1 19.3 11.6" stroke-width="1.25" stroke-linecap="butt"/><path d="M16.6 12.2 H23 L19.75 16.6 Z" fill="currentColor" stroke="none"/></svg>
<svg class="ic" viewBox="0 0 24 24" width="24" height="24" style="left:1542px;top:578.75px;color:#0288d1;"><path d="M2.3 21.7 L4 17.4 L18 1.7 L22 5.7 L7.4 20.9 Z M16.1 3.6 L20.2 7.5 M4 17.4 L7.4 20.9 M6.5 19.9 L21 4.8" stroke-width="1.2" stroke-linejoin="miter"/></svg>
<svg class="ic" viewBox="0 0 24 24" width="24" height="24" style="left:1581.7px;top:578.75px;color:#0288d1;"><circle cx="12" cy="4.4" r="2.6" fill="currentColor" stroke="none"/><circle cx="12" cy="12.05" r="2.6" fill="currentColor" stroke="none"/><circle cx="12" cy="19.6" r="2.6" fill="currentColor" stroke="none"/></svg>
</div>
<div style="left:1509.3px;top:307px;width:1.4px;height:678px;background:rgba(0,0,0,.2)"></div>
<div style="left:1644px;top:405px;width:8px;height:482px;background:#b9b9b9;border-radius:4px;"></div>
<div style="left:20px;top:986px;width:1635px;height:13.5px;background:#fff;"></div>
<div style="left:23px;top:989px;width:988px;height:8px;background:#bbb;border-radius:4px;"></div>
<div style="left:20px;top:999px;width:1635px;height:1px;background:#e0e0e0"></div>
<div style="left:1654px;top:402px;width:1px;height:598px;background:#e6e6e6"></div>
</main>
<div class="overlay"></div>
<section class="modal" style="left:390px;top:30px;width:1140px;height:1020px;">
<div style="left:0px;top:0px;width:1140px;height:60px;background:#e5e5e5;border-radius:4px 4px 0 0;"></div>
<h2 class="t m" style="left:41.13px;top:15px;font-size:22.5px;color:#222;transform:scaleX(0.9933);">Add devices</h2>
<svg class="ic" viewBox="0 0 24 24" width="24" height="24" style="left:1080.4px;top:18.3px;color:#0288d1;"><path d="M5.2 5.2 L18.8 18.8 M18.8 5.2 L5.2 18.8" stroke-width="1.5"/></svg>
<h3 class="t m" style="left:284.02px;top:90px;font-size:30px;line-height:40px;color:#11467f;transform:scaleX(0.9966);">Choose how you want to add more devices</h3>
<div class="scroll" style="left:250px;top:160px;width:870px;height:740px;">
<div style="left:855px;top:0px;width:14.5px;height:740px;background:#fafafa;box-shadow:inset 1px 0 0 #eee,inset -1px 0 0 #eee;"></div>
<div style="left:859px;top:3px;width:7px;height:678px;background:#c1c1c1;border-radius:4px;"></div>
<div style="left:38px;top:20px;width:20px;height:20px;border:1.2px solid #8c8c8c;border-radius:50%;box-sizing:border-box;background:#fff"></div>
<div style="left:73px;top:0px;width:60px;height:60px;background:#e6e6e6;border-radius:50%;"></div>
<svg class="ic" viewBox="0 0 32 32" width="30.5" height="30.5" style="left:87.65px;top:14.75px;color:#333;"><path d="M16.00 16.00 L30.80 16.00 M30.80 16.00 L28.25 18.55 M30.80 16.00 L28.25 13.45" stroke-width="1.9"/><path d="M16.00 16.00 L26.04 26.04 M26.04 26.04 L22.44 26.04 M26.04 26.04 L26.04 22.44" stroke-width="1.9"/><path d="M16.00 16.00 L16.00 30.80 M16.00 30.80 L13.45 28.25 M16.00 30.80 L18.55 28.25" stroke-width="1.9"/><path d="M16.00 16.00 L5.96 26.04 M5.96 26.04 L5.96 22.44 M5.96 26.04 L9.56 26.04" stroke-width="1.9"/><path d="M16.00 16.00 L1.20 16.00 M1.20 16.00 L3.75 13.45 M1.20 16.00 L3.75 18.55" stroke-width="1.9"/><path d="M16.00 16.00 L5.96 5.96 M5.96 5.96 L9.56 5.96 M5.96 5.96 L5.96 9.56" stroke-width="1.9"/><path d="M16.00 16.00 L16.00 1.20 M16.00 1.20 L18.55 3.75 M16.00 1.20 L13.45 3.75" stroke-width="1.9"/><path d="M16.00 16.00 L26.04 5.96 M26.04 5.96 L26.04 9.56 M26.04 5.96 L22.44 5.96" stroke-width="1.9"/><circle cx="16" cy="16" r="5.7" fill="currentColor" stroke="none"/></svg>
<h4 class="t m" style="left:141.9px;top:0px;font-size:20px;color:#11467f;transform:scaleX(0.9970);">Discover via seed devices</h4>
<p class="t" style="left:141.9px;top:30px;color:#333;">Use seed devices as a starting point to discover</p>
<p class="t" style="left:141.9px;top:60px;color:#333;transform:scaleX(1.0050);">neighboring devices.</p>
<div style="left:38px;top:140px;width:20px;height:20px;border:5.5px solid #0277bd;border-radius:50%;box-sizing:border-box;background:#fff"></div>
<div style="left:73px;top:120px;width:60px;height:60px;background:#e6e6e6;border-radius:50%;"></div>
<svg class="ic" viewBox="0 0 32 32" width="30.5" height="30.5" style="left:87.65px;top:134.75px;color:#333;"><path d="M16.00 16.00 L29.60 16.00" stroke-width="1.8"/><circle cx="29.60" cy="16.00" r="1.7" fill="currentColor" stroke="none"/><path d="M16.00 16.00 L25.76 25.76" stroke-width="1.8"/><circle cx="25.76" cy="25.76" r="1.7" fill="currentColor" stroke="none"/><path d="M16.00 16.00 L16.00 29.60" stroke-width="1.8"/><circle cx="16.00" cy="29.60" r="1.7" fill="currentColor" stroke="none"/><path d="M16.00 16.00 L6.24 25.76" stroke-width="1.8"/><circle cx="6.24" cy="25.76" r="1.7" fill="currentColor" stroke="none"/><path d="M16.00 16.00 L2.40 16.00" stroke-width="1.8"/><circle cx="2.40" cy="16.00" r="1.7" fill="currentColor" stroke="none"/><path d="M16.00 16.00 L6.24 6.24" stroke-width="1.8"/><circle cx="6.24" cy="6.24" r="1.7" fill="currentColor" stroke="none"/><path d="M16.00 16.00 L16.00 2.40" stroke-width="1.8"/><circle cx="16.00" cy="2.40" r="1.7" fill="currentColor" stroke="none"/><path d="M16.00 16.00 L25.76 6.24" stroke-width="1.8"/><circle cx="25.76" cy="6.24" r="1.7" fill="currentColor" stroke="none"/><circle cx="16" cy="16" r="5.7" fill="currentColor" stroke="none"/></svg>
<h4 class="t m" style="left:141.9px;top:120px;font-size:20px;color:#11467f;transform:scaleX(1.0108);">Discover via direct neighbor inference</h4>
<p class="t" style="left:141.9px;top:150px;color:#333;transform:scaleX(0.9824);">Use the CDP/LLDP data from the devices you’re already</p>
<p class="t" style="left:141.9px;top:180px;color:#333;transform:scaleX(1.0109);">collecting from to discover direct (one-hop) neighbors</p>
<p class="t" style="left:141.9px;top:210px;color:#333;transform:scaleX(1.0228);">without logging in to them.</p>
<div style="left:38px;top:290px;width:20px;height:20px;border:1.2px solid #8c8c8c;border-radius:50%;box-sizing:border-box;background:#fff"></div>
<div style="left:73px;top:270px;width:60px;height:60px;background:#e6e6e6;border-radius:50%;"></div>
<svg class="ic" viewBox="0 0 32 32" width="32" height="32" style="left:86.9px;top:284px;color:#333;"><circle cx="16" cy="16" r="14" stroke-width="1.9"/><path d="M21.3 9.6 A8.4 8.4 0 1 1 9.5 10.7" stroke-width="1.1" stroke-dasharray="1.1 1.5"/><path d="M24.2 8.2 A11 11 0 0 1 9 24.4" stroke-width="1.1" stroke-dasharray="1.1 1.5"/><path d="M19 11.5 A5.4 5.4 0 1 1 11.6 13" stroke-width="1" stroke-dasharray="1 1.4"/><path d="M16 16 L24.7 10" stroke-width="1.7"/><circle cx="16" cy="16" r="1.6" fill="currentColor" stroke="none"/><circle cx="13.3" cy="9.75" r="2" fill="currentColor" stroke="none"/><circle cx="5.6" cy="15.6" r="2" fill="currentColor" stroke="none"/><circle cx="20.8" cy="25" r="2" fill="currentColor" stroke="none"/></svg>
<h4 class="t m" style="left:141.9px;top:270px;font-size:20px;color:#11467f;transform:scaleX(1.0200);">Discover via subnet/host scan</h4>
<p class="t" style="left:141.9px;top:300px;color:#333;">Scan one or more subnets or hosts to discover devices in</p>
<p class="t" style="left:141.9px;top:330px;color:#333;transform:scaleX(1.0213);">specific parts of your network.</p>
<div style="left:38px;top:410px;width:20px;height:20px;border:1.2px solid #8c8c8c;border-radius:50%;box-sizing:border-box;background:#fff"></div>
<div style="left:73px;top:390px;width:60px;height:60px;background:#e6e6e6;border-radius:50%;"></div>
<svg class="ic" viewBox="0 0 32 32" width="32" height="32" style="left:86.9px;top:404px;color:#b0b0b0;"><path d="M8.2 19 H5.6 A4 4 0 0 1 6.9 11.2 A6.2 6.2 0 0 1 18.6 6.6 A4.7 4.7 0 0 1 25.4 11.5 A4 4 0 0 1 26.6 19 H23.6" stroke-width="1.7"/><circle cx="14.9" cy="14.75" r="6" stroke-width="1.7"/><path d="M19.3 19.2 L22 21.7" stroke-width="1.7"/><path d="M22.4 22.2 L30.6 29.8" stroke-width="3.1"/></svg>
<h4 class="t m" style="left:141.9px;top:390px;font-size:20px;color:#b3b3b3;transform:scaleX(1.0116);">Discover cloud-based virtualized devices</h4>
<span class="t" style="left:141.9px;top:420px;color:#333;transform:scaleX(0.9803);">Add a</span>
<a class="t" style="left:192.09px;top:420px;color:#0d8ee0;transform:scaleX(1.0159);">cloud setup</a>
<span class="t" style="left:287.1px;top:420px;color:#333;transform:scaleX(1.0076);">to discover virtual devices hosted in</span>
<p class="t" style="left:141.9px;top:450px;color:#333;transform:scaleX(1.0215);">the cloud.</p>
<div style="left:38px;top:530px;width:20px;height:20px;border:1.2px solid #8c8c8c;border-radius:50%;box-sizing:border-box;background:#fff"></div>
<div style="left:73px;top:510px;width:60px;height:60px;background:#e6e6e6;border-radius:50%;"></div>
<svg class="ic" viewBox="0 0 32 32" width="32" height="32" style="left:86.9px;top:524px;color:#333;"><path d="M20.4 12 V4.2 A1 1 0 0 0 19.4 3.2 H3.4 A1 1 0 0 0 2.4 4.2 V27 A1 1 0 0 0 3.4 28 H19.4 A1 1 0 0 0 20.4 27 V22.6" stroke-width="2"/><rect x="2.4" y="3.2" width="18" height="5.4" fill="currentColor" stroke="none"/><circle cx="5" cy="5.8" r=".8" fill="#e6e6e6" stroke="none"/><circle cx="8.3" cy="5.8" r=".8" fill="#e6e6e6" stroke="none"/><rect x="11" y="5.1" width="8" height="1.4" fill="#e6e6e6" stroke="none"/><path d="M30 17.7 H15" stroke-width="3"/><path d="M8.5 17.7 L15.8 12.3 V23.1 Z" fill="currentColor" stroke-width="1"/></svg>
<h4 class="t m" style="left:141.9px;top:510px;font-size:20px;color:#11467f;transform:scaleX(1.0377);">Import from .csv</h4>
<p class="t" style="left:141.9px;top:540px;color:#333;transform:scaleX(1.0073);">Import a .csv file containing three columns: name,</p>
<p class="t" style="left:141.9px;top:570px;color:#333;">IP/host, and SSH port (optional) for all devices you want</p>
<p class="t" style="left:141.9px;top:600px;color:#333;transform:scaleX(1.0463);">to collect from.</p>
<div style="left:38px;top:680px;width:20px;height:20px;border:1.2px solid #8c8c8c;border-radius:50%;box-sizing:border-box;background:#fff"></div>
<div style="left:73px;top:660px;width:60px;height:60px;background:#e6e6e6;border-radius:50%;"></div>
<svg class="ic" viewBox="0 0 32 32" width="32" height="32" style="left:86.9px;top:674px;color:#333;"><path d="M28.5 13.6 A13.3 13.3 0 1 0 14 28.2" stroke-width="1.8"/><path d="M7.30 7.30 L13.50 13.30 M13.50 13.30 L9.30 13.37 M13.50 13.30 L13.43 9.10" stroke-width="1.8"/><path d="M16.80 12.70 L22.80 7.00 M22.80 7.00 L22.69 11.20 M22.80 7.00 L18.60 6.89" stroke-width="1.8"/><path d="M13.30 16.80 L7.30 22.30 M7.30 22.30 L7.48 18.10 M7.30 22.30 L11.50 22.48" stroke-width="1.8"/><rect x="17.6" y="17.4" width="12.2" height="12.2" rx="1" stroke-width="2"/><path d="M23.7 20.3 V26.7 M20.5 23.5 H26.9" stroke-width="1.8"/></svg>
<h4 class="t m" style="left:141.9px;top:660px;font-size:20px;color:#11467f;">Enter devices manually</h4>
<p class="t" style="left:141.9px;top:690px;color:#333;transform:scaleX(1.0039);">Add devices you want to collect from by entering their</p>
<p class="t" style="left:141.9px;top:720px;color:#333;">names, IPs/hosts, and SSH ports (optional).</p>
</div>
<div style="left:0px;top:960px;width:1140px;height:60px;background:#e5e5e5;border-radius:0 0 4px 4px;"></div>
<div class="btn" style="left:880px;top:970px;width:100px;height:40px;background:#fff;border:1.5px solid #0b87d6;border-radius:4px;box-sizing:border-box;box-shadow:0 1px 3px rgba(0,0,0,.25);"></div>
<span class="t m" style="left:913.73px;top:974.5px;font-size:18px;color:#0b87d6;transform:scaleX(0.9654);">Quit</span>
<div class="btn" style="left:1000px;top:970px;width:100px;height:40px;background:#0288d1;border-radius:4px;box-shadow:0 1px 3px rgba(0,0,0,.35);"></div>
<span class="t m" style="left:1031.13px;top:974.5px;font-size:18px;color:#fff;transform:scaleX(0.9856);">Next</span>
</section>
</body></html>
